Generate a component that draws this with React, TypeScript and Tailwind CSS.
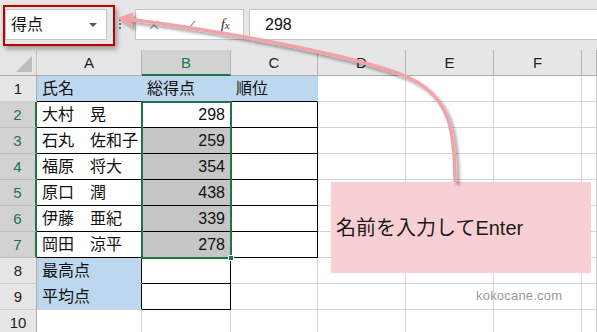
const plain = 'border-r border-b border-[#d4d4d4]';
const blueTop = 'bg-[#bdd7ee] border-r border-b border-r-[#bdd7ee] border-b-black';
const box = 'border-r border-b border-black';
const boxGrey = 'bg-[#c6c6c6] border-r border-b border-black';
const blueSide = 'bg-[#bdd7ee] border-r border-b border-r-black border-b-[#bdd7ee]';
const blueSideLast = 'bg-[#bdd7ee] border-r border-b border-r-black border-b-[#d4d4d4]';

const rowHead = 'bg-[#e6e6e6] border-r border-b border-r-[#ababab] border-b-[#d0d0d0] text-[#222]';
const rowHeadSel = 'bg-[#d2d2d2] border-r-2 border-b border-r-[#217346] border-b-[#bdbdbd] text-[#217346]';

type Cell = { text?: string; cls: string; num?: boolean };

const people: [string, number][] = [
  ['大村　晃', 298],
  ['石丸　佐和子', 259],
  ['福原　将大', 354],
  ['原口　潤', 438],
  ['伊藤　亜紀', 339],
  ['岡田　涼平', 278],
];

const rest = (): Cell[] => [{ cls: plain }, { cls: plain }, { cls: plain }, { cls: plain }];

const rows: { head: string; sel: boolean; cells: Cell[] }[] = [
  {
    head: '1',
    sel: false,
    cells: [
      { text: '氏名', cls: blueTop },
      { text: '総得点', cls: blueTop },
      { text: '順位', cls: blueTop },
      ...rest(),
    ],
  },
  ...people.map(([name, score], i) => ({
    head: String(i + 2),
    sel: true,
    cells: [
      { text: name, cls: box },
      { text: String(score), cls: i === 0 ? box : boxGrey, num: true },
      { cls: box },
      ...rest(),
    ],
  })),
  {
    head: '8',
    sel: false,
    cells: [{ text: '最高点', cls: blueSide }, { cls: box }, { cls: plain }, ...rest()],
  },
  {
    head: '9',
    sel: false,
    cells: [{ text: '平均点', cls: blueSideLast }, { cls: box }, { cls: plain }, ...rest()],
  },
  {
    head: '10',
    sel: false,
    cells: [{ cls: plain }, { cls: plain }, { cls: plain }, ...rest()],
  },
];

const columns = ['A', 'B', 'C', 'D', 'E', 'F', ''];

function FormulaBar() {
  return (
    <div className="h-[50px] bg-[#e6e6e6] flex items-start pt-[9px]">
      <div className="ml-[5px] w-[102px] h-[31px] bg-white border border-[#c6c6c6] flex items-center pl-[5px] pr-[9px]">
        <span className="flex-1 text-[16px] text-[#111]">得点</span>
        <svg width="8" height="4" viewBox="0 0 8 4">
          <path d="M0 0H8L4 4Z" fill="#555" />
        </svg>
      </div>
      <div className="ml-[12px] mt-[10px] flex flex-col gap-[2px]">
        <span className="w-[2px] h-[2px] bg-[#777]" />
        <span className="w-[2px] h-[2px] bg-[#777]" />
        <span className="w-[2px] h-[2px] bg-[#777]" />
      </div>
      <div className="ml-[14px] w-[109px] h-[31px] bg-white border border-[#c6c6c6] flex items-center">
        <span className="w-[37px] flex justify-center">
          <svg width="10" height="10" viewBox="0 0 10 10">
            <path d="M1 1L9 9M9 1L1 9" stroke="#a8a8a8" strokeWidth="1.4" />
          </svg>
        </span>
        <span className="w-[37px] flex justify-center">
          <svg width="13" height="10" viewBox="0 0 13 10">
            <path d="M1 5L5 9L12 1" stroke="#a8a8a8" strokeWidth="1.5" fill="none" />
          </svg>
        </span>
        <span className="w-[37px] flex justify-center items-baseline font-['Liberation_Serif',serif] italic text-[#333]">
          <span className="text-[15px]">f</span>
          <span className="text-[11px]">x</span>
        </span>
      </div>
      <div className="ml-[5px] flex-1 h-[31px] bg-white border border-r-0 border-[#c6c6c6] flex items-center pl-[15px] text-[16px] text-[#111]">
        298
      </div>
    </div>
  );
}

function Sheet() {
  return (
    <div className="grid grid-cols-[37px_105px_89px_87px_88px_88px_88px_1fr]">
      <div className="h-[26px] bg-[#e6e6e6] border-r border-b border-r-[#c0c0c0] border-b-[#ababab] flex items-end justify-end pr-[4px] pb-[3px]">
        <svg width="16" height="16" viewBox="0 0 16 16">
          <path d="M16 0V16H0Z" fill="#bdbdbd" />
        </svg>
      </div>
      {columns.map((c) =>
        c === 'B' ? (
          <div
            key={c}
            className="h-[26px] bg-[#d2d2d2] border-r border-b-2 border-r-[#b4b4b4] border-b-[#217346] flex items-center justify-center text-[15px] text-[#217346]"
          >
            {c}
          </div>
        ) : (
          <div
            key={c || 'g'}
            className="h-[26px] bg-[#e6e6e6] border-r border-b border-r-[#b4b4b4] border-b-[#ababab] flex items-center justify-center text-[15px] text-[#222]"
          >
            {c}
          </div>
        )
      )}
      {rows.map((r) => (
        <div key={r.head} className="contents">
          <div className={`h-[26px] flex items-center justify-center text-[15px] ${r.sel ? rowHeadSel : rowHead}`}>
            {r.head}
          </div>
          {r.cells.map((cell, j) => (
            <div
              key={j}
              className={`h-[26px] flex items-center text-[16px] text-[#111] whitespace-nowrap overflow-hidden ${
                cell.num ? 'justify-end pr-[5px]' : 'pl-[5px]'
              } ${cell.cls}`}
            >
              {cell.text}
            </div>
          ))}
        </div>
      ))}
    </div>
  );
}

export default function App() {
  return (
    <div className="relative w-[597px] h-[332px] overflow-hidden bg-white font-['Liberation_Sans','Noto_Sans_CJK_JP',sans-serif] leading-none">
      <FormulaBar />
      <Sheet />

      {/* selection outline + fill handle */}
      <div className="absolute left-[141px] top-[101px] w-[91px] h-[158px] border-2 border-[#217346]" />
      <div className="absolute left-[228px] top-[255px] w-[6px] h-[6px] bg-[#217346] border border-white" />

      {/* red highlight round the name box */}
      <div className="absolute left-[3px] top-[5px] w-[112px] h-[41px] border-2 border-[#c00000] shadow-[2px_3px_5px_rgba(0,0,0,0.35)]" />

      {/* callout */}
      <div className="absolute left-[331px] top-[182px] w-[260px] h-[91px] bg-[#f8d0d3] flex items-center pl-[5px] text-[20px] text-[#1a1a1a] font-['Liberation_Sans','Noto_Sans_CJK_JP',sans-serif]">
        名前を入力してEnter
      </div>

      <svg className="absolute left-0 top-0 pointer-events-none" width="597" height="332" viewBox="0 0 597 332">
        <defs>
          <filter id="sh" x="-20%" y="-20%" width="140%" height="140%">
            <feDropShadow dx="3" dy="3" stdDeviation="1.8" floodColor="#000" floodOpacity="0.35" />
          </filter>
        </defs>
        <g filter="url(#sh)">
          <path
            d="M455 182C455 130 450 95 405 76C360 58 250 35 128 19"
            stroke="#f2a2aa"
            strokeWidth="3.5"
            fill="none"
          />
          <path d="M117 18L134 12L131 19.5L133 28Z" fill="#f2a2aa" />
        </g>
      </svg>

      <div className="absolute left-[476px] top-[289px] text-[13px] text-[#9a9a9a] tracking-[0.2px] font-['Liberation_Sans',sans-serif]">
        kokocane.com
      </div>
    </div>
  );
}
